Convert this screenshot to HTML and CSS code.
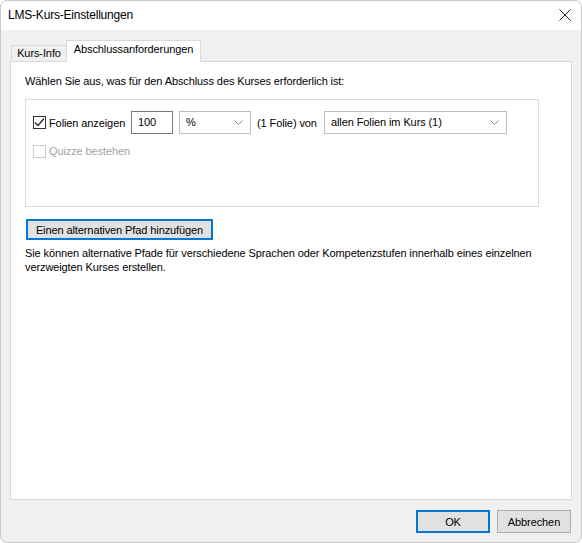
FILE: index.html
```html
<!DOCTYPE html>
<html lang="de">
<head>
<meta charset="utf-8">
<title>LMS-Kurs-Einstellungen</title>
<link rel="stylesheet" href="styles.css">
</head>
<body>
<div class="window">
  <div class="titlebar">
    <span class="title">LMS-Kurs-Einstellungen</span>
    <svg class="close" width="12" height="12" viewBox="0 0 12 12"><path d="M0.5 0.5 L11.5 11.5 M11.5 0.5 L0.5 11.5" stroke="#1a1a1a" stroke-width="1" fill="none"/></svg>
  </div>
  <div class="body">
    <div class="tabs">
      <div class="tab">Kurs-Info</div>
      <div class="tab active">Abschlussanforderungen</div>
    </div>
    <div class="panel">
      <p class="intro">Wählen Sie aus, was für den Abschluss des Kurses erforderlich ist:</p>
      <div class="group">
        <div class="row">
          <label class="check">
            <span class="box checked"><svg width="11" height="11" viewBox="0 0 11 11"><path d="M1 5.5 L4 8.5 L10 1.5" stroke="#222" stroke-width="1.2" fill="none"/></svg></span>
            <span>Folien anzeigen</span>
          </label>
          <div class="input num">100</div>
          <div class="select pct"><span>%</span><svg class="chev" width="9" height="6" viewBox="0 0 9 6"><path d="M0.5 0.5 L4.5 4.5 L8.5 0.5" stroke="#8a8a8a" fill="none"/></svg></div>
          <span class="label">(1 Folie) von</span>
          <div class="select all"><span>allen Folien im Kurs (1)</span><svg class="chev" width="9" height="6" viewBox="0 0 9 6"><path d="M0.5 0.5 L4.5 4.5 L8.5 0.5" stroke="#8a8a8a" fill="none"/></svg></div>
        </div>
        <label class="check disabled">
          <span class="box"></span>
          <span>Quizze bestehen</span>
        </label>
      </div>
      <button class="btn focus wide">Einen alternativen Pfad hinzufügen</button>
      <p class="desc">Sie können alternative Pfade für verschiedene Sprachen oder Kompetenzstufen innerhalb eines einzelnen verzweigten Kurses erstellen.</p>
    </div>
  </div>
  <div class="footer">
    <button class="btn focus ok">OK</button>
    <button class="btn cancel">Abbrechen</button>
  </div>
</div>
</body>
</html>
```
FILE: styles.css
```css
* { box-sizing: border-box; }
html, body { margin: 0; padding: 0; background: #ffffff; }
body {
  font-family: "Liberation Sans", Arial, sans-serif;
  font-size: 11px;
  letter-spacing: -0.1px;
  color: #000;
}
.window {
  width: 582px;
  height: 543px;
  border: 1px solid #c9c9c9;
  border-radius: 7px;
  background: #f0f0f0;
  display: flex;
  flex-direction: column;
  overflow: hidden;
}
.titlebar {
  height: 29px;
  background: #ffffff;
  display: flex;
  align-items: center;
  justify-content: space-between;
  padding: 0 10px 1px 7px;
  flex: none;
}
.title { font-size: 12px; letter-spacing: -0.2px; }
.close { display: block; }
.body {
  flex: 1;
  display: flex;
  flex-direction: column;
  padding: 10px 9px 0 9px;
}
.tabs {
  display: flex;
  align-items: flex-end;
  height: 21px;
  padding-left: 1px;
  flex: none;
}
.tab {
  height: 16px;
  line-height: 14px;
  width: 56px;
  text-align: center;
  border: 1px solid #d9d9d9;
  border-bottom: none;
  background: #f0f0f0;
  white-space: nowrap;
}
.tab.active {
  height: 22px;
  line-height: 17px;
  width: 135px;
  background: #ffffff;
  margin-bottom: -1px;
  position: relative;
  z-index: 1;
  margin-left: -1px;
}
.panel {
  flex: 1;
  background: #ffffff;
  border: 1px solid #d9d9d9;
  padding: 12px 14px 0 14px;
}
.intro {
  margin: 0;
  line-height: 15px;
  white-space: nowrap;
}
.group {
  margin-top: 10px;
  width: 514px;
  height: 108px;
  border: 1px solid #dcdcdc;
  padding: 11px 7px 0 7px;
}
.row {
  display: flex;
  align-items: center;
  height: 23px;
  white-space: nowrap;
}
.check {
  display: flex;
  align-items: center;
  gap: 3px;
  white-space: nowrap;
}
.row .check { width: 90px; flex: none; }
.box {
  width: 13px;
  height: 13px;
  border: 1px solid #333333;
  background: #fff;
  display: flex;
  align-items: center;
  justify-content: center;
  flex: none;
}
.check.disabled { color: #a3a3a3; margin-top: 8px; height: 18px; }
.check.disabled .box { border-color: #cccccc; }
.input, .select {
  height: 23px;
  border: 1px solid #7a7a7a;
  background: #fff;
  display: flex;
  align-items: center;
  padding: 0 6px 2px 6px;
  flex: none;
}
.num { width: 42px; margin-left: 8px; }
.select { justify-content: space-between; border-color: #bdbdbd; padding-right: 7px; }
.pct { width: 72px; margin-left: 6px; }
.all { width: 183px; margin-left: 6px; }
.chev { display: block; margin-top: 2px; }
.label { margin-left: 6px; width: 61px; flex: none; }
.btn {
  font-family: inherit;
  font-size: 11px;
  letter-spacing: -0.1px;
  color: #000;
  background: #e1e1e1;
  border: 1px solid #adadad;
  padding: 0;
  white-space: nowrap;
}
.btn.focus { border: 2px solid #0078d7; }
.wide {
  display: block;
  margin-top: 12px;
  margin-left: 1px;
  width: 187px;
  height: 21px;
}
.desc {
  margin: 6px 0 0 0;
  line-height: 14px;
  width: 520px;
}
.footer {
  flex: none;
  height: 42px;
  display: flex;
  justify-content: flex-end;
  gap: 7px;
  padding: 10px 10px 0 0;
}
.ok, .cancel { width: 74px; height: 23px; }
```
